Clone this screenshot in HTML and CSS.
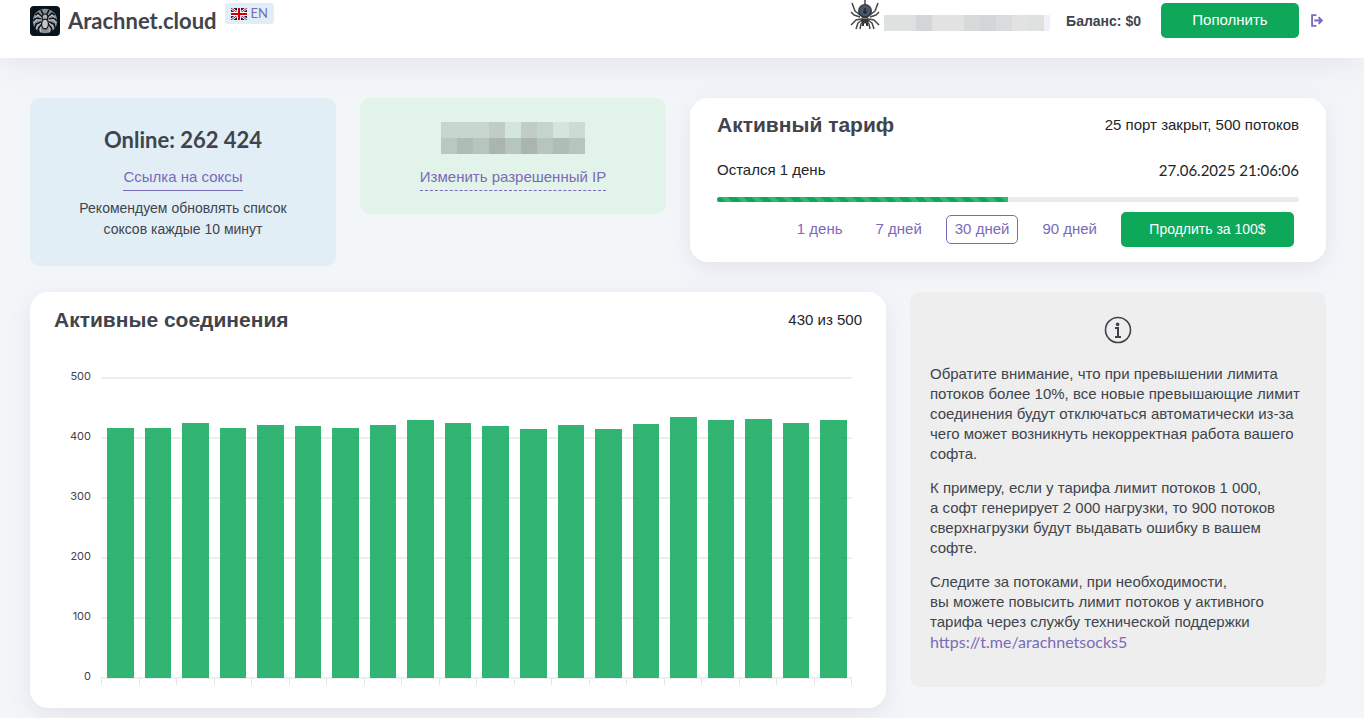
FILE: index.html
```html
<!DOCTYPE html>
<html lang="ru">
<head>
<meta charset="utf-8">
<meta name="viewport" content="width=device-width, initial-scale=1">
<title>Arachnet.cloud</title>
<link rel="stylesheet" href="styles.css">
</head>
<body>
<header class="header">
  <a class="brand" href="#">
    <svg class="brand-logo" viewBox="0 0 30 30" aria-hidden="true">
      <rect width="30" height="30" rx="4" fill="#07131d"/>
      <circle cx="15" cy="15" r="12.2" fill="#8b8d90"/>
      <g fill="none" stroke="#07131d" stroke-width="1.6">
        <path d="M12 11 8 7 5.500 9M18 11l4-4 2.500 2M11 13l-5-1-3 3M19 13l5-1 3 3M11 16l-5 2-1 4M19 16l5 2 1 4M12 18l-4 5 1 3M18 18l4 5-1 3M11 4l2 4M19 4l-2 4"/>
      </g>
      <g fill="none" stroke="#c9cacc" stroke-width="1">
        <path d="M12 12 8 9 5 12M18 12l4-3 3 3M11 14l-5 0-2 3M19 14l5 0 2 3M11 17l-4 3 0 3M19 17l4 3 0 3M12 19l-2 4 1 3M18 19l2 4-1 3"/>
      </g>
      <ellipse cx="15" cy="11" rx="3.500" ry="3.500" fill="#07131d"/>
      <ellipse cx="15" cy="11" rx="2.300" ry="2.600" fill="#aeb0b3"/>
      <ellipse cx="15" cy="18" rx="4" ry="5.500" fill="#07131d"/>
      <ellipse cx="15" cy="18" rx="2.800" ry="4.300" fill="#c4c5c8"/>
    </svg>
    <span class="brand-name">Arachnet.cloud</span>
  </a>
  <a class="lang" href="#">
    <svg class="flag" viewBox="0 0 16 12" aria-hidden="true">
      <rect width="16" height="12" fill="#012169"/>
      <path d="M0 0l16 12M16 0 0 12" stroke="#fff" stroke-width="2.600"/>
      <path d="M0 0l16 12M16 0 0 12" stroke="#c8102e" stroke-width="1"/>
      <path d="M8 0v12M0 6h16" stroke="#fff" stroke-width="4"/>
      <path d="M8 0v12M0 6h16" stroke="#c00" stroke-width="2.200"/>
    </svg>
    <span>EN</span>
  </a>
  <div class="account">
    <svg class="avatar" viewBox="0 0 30 30" aria-hidden="true">
      <g fill="none" stroke="#454843" stroke-width="1.500" stroke-linejoin="round">
        <path d="M15 0v6M10 15 5 11 2 3M20 15l5-4 3-8M10 17l-6-2-3-3M20 17l6-2 3-3M11 19l-5 1-5 5M19 19l5 1 5 5M12 20l-4 3-2 6M18 20l4 3 2 6M13 22l-2 2-1 5M17 22l2 2 1 5"/>
      </g>
      <circle cx="15" cy="11" r="7" fill="#30353d"/>
      <circle cx="15" cy="10.500" r="5.600" fill="#4a566a"/>
      <path d="M15 8v6M13 12h4" stroke="#22272e" stroke-width="1.400"/>
      <ellipse cx="15" cy="20" rx="4" ry="3.500" fill="#33383a"/>
      <path d="M13 22v4M17 22v4" stroke="#33383a" stroke-width="2"/>
      <path d="M12.500 18.500h5" stroke="#85857a" stroke-width="1"/>
    </svg>
    <svg class="user-mask" viewBox="0 0 166 16" aria-hidden="true">
      <rect width="166" height="16" fill="#dfe0e0"/>
      <path fill="#d4d5d7" d="M32 0h16v16H32zM96 0h16v16H96z"/>
      <path fill="#d8d9d9" d="M80 0h16v16H80z"/>
      <path fill="#dadbdc" d="M112 0h16v16h-16z"/>
      <path fill="#e2e2e2" d="M48 0h32v16H48zM128 0h16v16h-16z"/>
      <path fill="#f0f1f7" d="M160 0h6v16h-6z"/>
    </svg>
    <span class="balance">Баланс: $0</span>
    <button class="btn btn-topup" type="button">Пополнить</button>
    <a class="logout" href="#" aria-label="Выход">
      <svg viewBox="0 0 12 12" aria-hidden="true"><path d="M5 1H1v10h4M3 6h7M7 3l3 3-3 3" fill="none" stroke="#7b69b9" stroke-width="1.700"/></svg>
    </a>
  </div>
</header>

<main class="grid">
  <section class="tile tile-online">
    <h2 class="online">Online: 262 424</h2>
    <a class="link" href="#">Ссылка на соксы</a>
    <p class="hint">Рекомендуем обновлять список соксов каждые 10 минут</p>
  </section>

  <section class="tile tile-ip">
    <svg class="ip-mask" viewBox="0 0 144 32" aria-hidden="true">
      <rect width="144" height="16" fill="#c7d7cf"/>
      <rect y="16" width="144" height="16" fill="#b6c5be"/>
      <path fill="#bfcdc5" d="M48 0h16v16H48zM80 0h16v16H80z"/>
      <path fill="#d4e5da" d="M64 0h16v16H64zM112 0h16v16h-16z"/>
      <path fill="#c4d5cf" d="M96 0h16v16H96z"/>
      <path fill="#cbdcd4" d="M128 0h16v16h-16z"/>
      <path fill="#aab5b0" d="M48 16h16v16H48zM80 16h16v16H80z"/>
      <path fill="#afbdb7" d="M16 16h16v16H16zM112 16h16v16h-16z"/>
      <path fill="#bac8c1" d="M0 16h16v16H0z"/>
    </svg>
    <a class="link link-dashed" href="#">Изменить разрешенный IP</a>
  </section>

  <section class="card tariff">
    <div class="row">
      <h3 class="title">Активный тариф</h3>
      <span class="value">25 порт закрыт, 500 потоков</span>
    </div>
    <div class="row row-left">
      <span class="value">Остался 1 день</span>
      <time class="value value-date">27.06.2025 21:06:06</time>
    </div>
    <div class="progress"><div class="progress-bar" style="width:50%"></div></div>
    <div class="periods">
      <button class="period" type="button">1 день</button>
      <button class="period" type="button">7 дней</button>
      <button class="period period-active" type="button">30 дней</button>
      <button class="period" type="button">90 дней</button>
      <button class="btn btn-extend" type="button">Продлить за 100$</button>
    </div>
  </section>

  <section class="card connections">
    <div class="row">
      <h3 class="title">Активные соединения</h3>
      <span class="value">430 из 500</span>
    </div>
    <div class="chart">
      <div class="axis"><span>500</span><span>400</span><span>300</span><span>200</span><span>100</span><span>0</span></div>
      <div class="plot">
        <div class="bars">
          <i style="height:83.200%"></i><i style="height:83.200%"></i><i style="height:84.800%"></i><i style="height:83%"></i><i style="height:84.200%"></i><i style="height:83.800%"></i><i style="height:83%"></i><i style="height:84.200%"></i><i style="height:85.800%"></i><i style="height:84.600%"></i><i style="height:83.600%"></i><i style="height:82.800%"></i><i style="height:84%"></i><i style="height:82.600%"></i><i style="height:84.400%"></i><i style="height:86.800%"></i><i style="height:85.600%"></i><i style="height:86.200%"></i><i style="height:84.600%"></i><i style="height:85.600%"></i>
        </div>
        <div class="ticks"><i></i><i></i><i></i><i></i><i></i><i></i><i></i><i></i><i></i><i></i><i></i><i></i><i></i><i></i><i></i><i></i><i></i><i></i><i></i><i></i></div>
      </div>
    </div>
  </section>

  <aside class="tile note">
    <svg class="info" viewBox="0 0 28 28" aria-hidden="true">
      <circle cx="14" cy="14" r="12.500" fill="none" stroke="#40444c" stroke-width="1.600"/>
      <circle cx="13.600" cy="8.400" r="1.800" fill="#40444c"/>
      <path d="M11 12h3v8.500M11 21h6" fill="none" stroke="#40444c" stroke-width="2"/>
    </svg>
    <p>Обратите внимание, что при превышении лимита<br>потоков более 10%, все новые превышающие лимит соединения будут отключаться автоматически из-за чего может возникнуть некорректная работа вашего софта.</p>
    <p>К примеру, если у тарифа лимит потоков 1 000,<br>а софт генерирует 2 000 нагрузки, то 900 потоков<br>сверхнагрузки будут выдавать ошибку в вашем<br>софте.</p>
    <p>Следите за потоками, при необходимости,<br>вы можете повысить лимит потоков у активного<br>тарифа через службу технической поддержки<br><a class="tg" href="#">https://t.me/arachnetsocks5</a></p>
  </aside>
</main>
</body>
</html>
```

FILE: styles.css
```css
* { box-sizing: border-box; }

body {
  margin: 0;
  background: #f3f6f9;
  color: #40444c;
  font: 14px/20px "Liberation Sans", Arial, sans-serif;
}

h2, h3, p { margin: 0; }
a { color: #7b69b9; text-decoration: none; }
button { font: inherit; cursor: pointer; }
svg { display: block; flex: none; }

.header {
  display: flex;
  align-items: flex-start;
  height: 58px;
  padding: 0 38px 0 30px;
  background: #fff;
  box-shadow: 0 0 40px rgba(82, 63, 105, .13);
}

.brand { display: flex; align-items: center; gap: 8px; padding-top: 6px; color: #40444c; }
.brand-logo { width: 30px; height: 30px; }
.brand-name { font: 700 22px/30px Lato, sans-serif; }

.lang {
  display: flex;
  align-items: center;
  gap: 4px;
  height: 21px;
  margin: 3px 0 0 8px;
  padding: 0 6px;
  border-radius: 3px;
  background: #e2eef6;
  font: 13px/21px Lato, sans-serif;
}
.flag { width: 16px; height: 12px; }

.account { display: flex; align-items: center; margin-left: auto; height: 38px; padding-top: 3px; }
.avatar { width: 30px; height: 30px; margin: 0 4px 12px 0; }
.user-mask { width: 166px; height: 16px; margin: 4px 16px 0 0; }
.balance { margin-right: 20px; font-weight: 700; }

.btn {
  height: 35px;
  padding: 0 0 1px;
  border: 0;
  border-radius: 5px;
  background: #0ea85a;
  color: #fff;
}
.btn-topup { width: 138px; font-size: 15px; }
.logout { margin: 0 2px 0 12px; }
.logout svg { width: 13px; height: 13px; }

.grid {
  display: grid;
  grid-template-columns: repeat(12, 1fr);
  align-items: start;
  gap: 26px 24px;
  padding: 40px 38px 10px 30px;
}

.tile { border-radius: 10px; }
.tile-online, .tile-ip {
  grid-column: span 3;
  display: flex;
  flex-direction: column;
  align-items: center;
  padding: 24px;
  text-align: center;
}
.tile-online { padding-bottom: 26px; background: #e2eef6; }
.tile-ip { background: #e2f3e9; padding-bottom: 23px; }
.online { margin-bottom: 7px; font: 700 22px/36px Lato, sans-serif; }
.link { padding-bottom: 1px; border-bottom: 1px solid #7b69b9; font-size: 15px; line-height: 24px; }
.link-dashed { border-bottom-style: dashed; }
.hint { max-width: 226px; margin-top: 7px; line-height: 21px; }
.ip-mask { width: 144px; height: 32px; margin-bottom: 11px; }

.card {
  border-radius: 18px;
  background: #fff;
  box-shadow: 0 6px 24px rgba(82, 63, 105, .1);
}
.row { display: flex; justify-content: space-between; align-items: center; }
.title { font-size: 21px; line-height: 28px; }
.value { color: #212529; font-size: 15px; }
.value-date { font-family: Lato, sans-serif; }

.tariff { grid-column: span 6; padding: 13px 27px 15px; }
.row-left { margin-top: 21px; }
.progress { height: 5px; margin: 17px 0 10px; border-radius: 3px; background: #e9ecef; overflow: hidden; }
.progress-bar {
  height: 5px;
  background: repeating-linear-gradient(45deg, #0ea85a 0 6px, #35b576 6px 11px);
}
.periods { display: flex; justify-content: flex-end; align-items: center; gap: 15px; padding-right: 5px; }
.period {
  height: 29px;
  padding: 0 8px 1px;
  border: 1px solid transparent;
  border-radius: 5px;
  background: none;
  color: #7b69b9;
  font-size: 15px;
}
.period-active { border-color: #7b69b9; }
.btn-extend { width: 173px; }

.connections { grid-column: span 8; padding: 14px 24px 22px; }
.chart { display: flex; padding: 32px 10px 0 0; }
.axis {
  display: flex;
  flex-direction: column;
  justify-content: space-between;
  width: 47px;
  height: 320px;
  padding-right: 10px;
  font: 11px/20px Inter, sans-serif;
  text-align: right;
}
.plot { flex: 1; padding-top: 11px; }
.bars {
  display: flex;
  align-items: flex-end;
  height: 302px;
  padding-bottom: 1px;
  background: linear-gradient(#eee 2px, transparent 2px) 0 0 / 100% 60px;
}
.bars i { flex: 1; margin: 0 5px 0 6px; background: rgba(14, 168, 90, .85); }
.ticks { display: flex; height: 6px; border-right: 1px solid #e4e4e4; }
.ticks i { flex: 1; border-left: 1px solid #e4e4e4; }

.note { grid-column: span 4; padding: 24px 20px 34px; background: #eee; font-size: 15px; }
.info { width: 28px; height: 28px; margin: 0 auto 20px; }
.note p + p { margin-top: 14px; }
.tg { font-family: Lato, sans-serif; font-size: 16px; }
```
